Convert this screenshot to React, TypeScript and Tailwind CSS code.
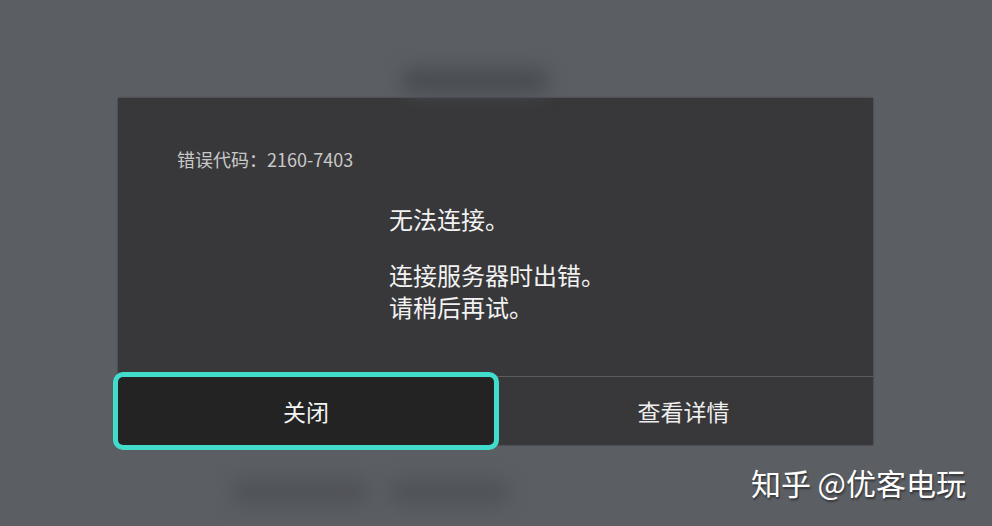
import React from 'react';

const font = { fontFamily: '"Noto Sans CJK SC", "Noto Sans", sans-serif' };

const ErrorDialog = () => {
  return (
    <div className="ml-[118px] w-[755px] h-[347px] bg-[#38383a] flex flex-col shadow-[0_0_2px_rgba(0,0,0,0.4)]">
      <div className="flex-1 relative">
        <p className="pt-[49px] pl-[59px] text-[18px] leading-[24px] text-[#c9c9c9]">错误代码：2160-7403</p>
        <div className="pl-[271px] pt-[32px] text-[24px] leading-[32px] text-[#f2f2f2]">
          <p>无法连接。</p>
          <p className="mt-[24px]">连接服务器时出错。</p>
          <p>请稍后再试。</p>
        </div>
      </div>
      <div className="h-px bg-[#5c5c5e]" />
      <div className="flex h-[68px]">
        <button className="w-[376px] bg-[#232324] rounded-[5px] ring-[5px] ring-[#41dccb] text-[23px] text-[#f4f4f4] flex items-center justify-center z-10">
          关闭
        </button>
        <button className="flex-1 text-[23px] text-[#eeeeee] flex items-center justify-center">
          查看详情
        </button>
      </div>
    </div>
  );
};

export default function App() {
  return (
    <div className="w-[992px] h-[526px] bg-[#5b5e63] overflow-hidden flex flex-col" style={font}>
      <div className="h-[98px] pt-[68px] pl-[402px]">
        <div className="w-[146px] h-[26px] bg-[#4a4d52] rounded-[10px] blur-[9px]" />
      </div>
      <ErrorDialog />
      <div className="flex items-start pt-[18px]">
        <div className="ml-[232px] mt-[16px] w-[136px] h-[26px] bg-[#505358] rounded-[10px] blur-[9px]" />
        <div className="ml-[22px] mt-[16px] w-[118px] h-[26px] bg-[#505358] rounded-[10px] blur-[9px]" />
        <p className="ml-auto mr-[26px] text-[30px] leading-[38px] text-white [text-shadow:1px_2px_2px_rgba(0,0,0,0.45)]">
          知乎 @优客电玩
        </p>
      </div>
    </div>
  );
}
